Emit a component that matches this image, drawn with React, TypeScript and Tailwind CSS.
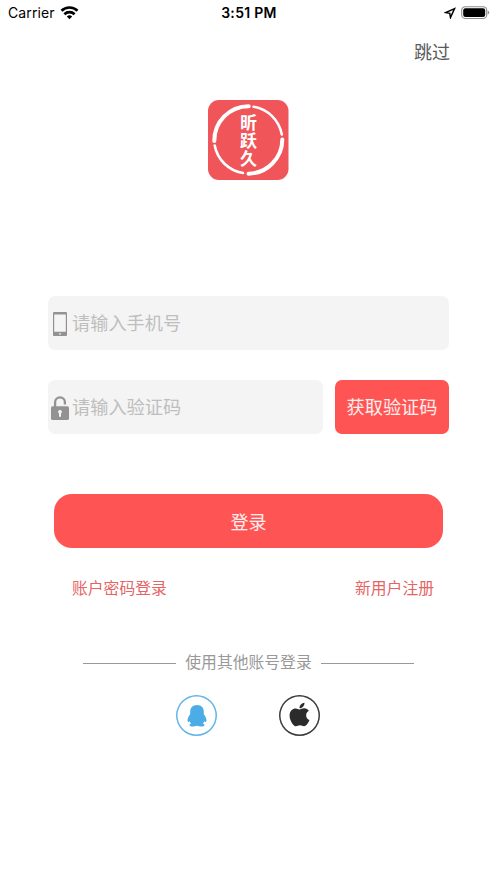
import type { ReactNode } from "react";
import { FaApple } from "react-icons/fa";

function StatusBar() {
  return (
    <div className="grid h-[26px] grid-cols-3 items-center pl-2 pr-[7px] font-['Inter','Liberation_Sans',sans-serif] font-normal text-black">
      <div className="flex items-center gap-[5px]">
        <span className="text-[14px] leading-[26px] tracking-[0.1px]">Carrier</span>
        <svg width="19" height="14" viewBox="0 0 18 14" fill="none" stroke="currentColor" strokeWidth="2.7">
          <path d="M1 4.8a11.4 11.4 0 0 1 16 0" />
          <path d="M3.9 8.2a7.3 7.3 0 0 1 10.2 0" />
          <path d="M9 13.2 6.300 10.5a3.900 3.900 0 0 1 5.400 0z" fill="currentColor" stroke="none" />
        </svg>
      </div>
      <div className="text-center text-[14px] font-semibold leading-[26px] tracking-[0.3px]">3:51 PM</div>
      <div className="flex items-center justify-end gap-[5px]">
        <svg width="12" height="12" viewBox="0 0 12 12" fill="none" stroke="currentColor" strokeWidth="1.5">
          <path d="M10.600 1.600 1.600 5.600l4.200.7.700 4.200z" />
        </svg>
        <svg width="29" height="14" viewBox="0 0 29 14">
          <rect x="0.7" y="0.7" width="25" height="11.8" rx="3.6" fill="none" stroke="#8e8e8e" strokeWidth="1.1" />
          <rect x="2.2" y="2.2" width="22" height="8.8" rx="2.2" />
          <path d="M26.700 4.600q1.500.5 1.500 2t-1.500 2z" fill="#8e8e8e" />
        </svg>
      </div>
    </div>
  );
}

function Logo() {
  return (
    <svg width="81" height="80" viewBox="0 0 81 80">
      <rect width="80.5" height="80" rx="11" fill="#f0555a" />
      <g fill="none" stroke="#fff" strokeLinecap="round">
        <path d="M6.300 41A34.400 34.400 0 0 1 40.700 6.200" strokeWidth="4" />
        <path d="M45.500 6.700A34.400 34.400 0 0 1 73.800 34.500" strokeWidth="2.6" />
        <path d="M74.300 39.500A34.400 34.400 0 0 1 40.500 73.700" strokeWidth="4" />
        <path d="M35 73A34.400 34.400 0 0 1 6.700 45.500" strokeWidth="2.6" />
      </g>
      <g
        className="font-['Noto_Sans_CJK_SC',sans-serif] text-[17px] font-bold"
        fill="#fff"
        textAnchor="middle"
      >
        <text x="40.5" y="28.5">昕</text>
        <text x="40.5" y="46.5">跃</text>
        <text x="40.5" y="64.5">久</text>
      </g>
    </svg>
  );
}

function PhoneIcon() {
  return (
    <svg width="24" height="24" viewBox="0 0 24 24">
      <path
        fill="#929292"
        fillRule="evenodd"
        d="M6 0h12q1 0 1 1v22q0 1-1 1H6q-1 0-1-1V1q0-1 1-1zm.2 2.400v17.400h11.600V2.400zm4.900 18.800v1.300h1.800v-1.300z"
      />
    </svg>
  );
}

function LockIcon() {
  return (
    <svg width="24" height="24" viewBox="0 0 24 24">
      <path d="M7.100 11V6.200a4.900 4.900 0 0 1 9.800 0v2.200" fill="none" stroke="#929292" strokeWidth="2.3" />
      <path
        fill="#929292"
        fillRule="evenodd"
        d="M4.600 10.200h14.800q1.600 0 1.600 1.600v10.600q0 1.600-1.600 1.600H4.600q-1.600 0-1.600-1.600V11.800q0-1.600 1.600-1.600zM12 13.900a1.900 1.900 0 0 0-1 3.500v3.400h2v-3.400a1.900 1.900 0 0 0-1-3.500z"
      />
    </svg>
  );
}

function QQIcon() {
  return (
    <svg width="20" height="22" viewBox="0 0 20 22" fill="#4bace6">
      <path d="M10 0c4.300 0 6.800 2.900 6.800 6.500v2.800c1.700 2 2.700 4.500 2.700 6.300 0 1.500-.9 1.700-2.300.7-.3.900-.7 1.600-1.300 2.200 1.300.5 1.700 1.200 1.500 1.900-.4 1.400-5 1.500-7.400.4-2.400 1.100-7 1-7.400-.4-.2-.7.2-1.400 1.500-1.900-.6-.6-1-1.300-1.300-2.200-1.400 1-2.300.8-2.300-.7 0-1.800 1-4.300 2.700-6.300V6.500C3.200 2.900 5.700 0 10 0z" />
    </svg>
  );
}

function Field({ icon, placeholder }: { icon: ReactNode; placeholder: string }) {
  return (
    <label className="flex h-[54px] min-w-0 flex-1 items-center rounded-[7px] bg-[#f4f4f4]">
      <span className="shrink-0 pt-px">{icon}</span>
      <input
        className="min-w-0 flex-1 bg-transparent pt-1 text-[18.2px] outline-none placeholder:text-[#bebebe]"
        placeholder={placeholder}
      />
    </label>
  );
}

export default function App() {
  return (
    <div className="flex h-[883px] w-[497px] flex-col bg-white font-['Liberation_Sans','Noto_Sans_CJK_SC',sans-serif]">
      <StatusBar />

      <div className="flex justify-end pr-[47px] pt-[11px]">
        <button className="h-[31px] text-[18px] leading-[30px] text-[#5a5a5a]">跳过</button>
      </div>

      <div className="flex justify-center pt-8">
        <Logo />
      </div>

      <form className="mt-[116px] px-12">
        <div className="flex">
          <Field icon={<PhoneIcon />} placeholder="请输入手机号" />
        </div>
        <div className="mt-[30px] flex gap-3">
          <Field icon={<LockIcon />} placeholder="请输入验证码" />
          <button type="button" className="h-[54px] w-[114px] rounded-[7px] bg-[#ff5454] pt-1 text-[18.2px] text-white/90">
            获取验证码
          </button>
        </div>

        <div className="mt-[60px] px-[6px]">
          <button type="button" className="block h-[54px] w-full rounded-[18px] bg-[#ff5454] pt-1 text-[18px] text-white/90">
            登录
          </button>
        </div>

        <div className="mt-[29px] flex justify-between pl-6 pr-[15px] text-[15.8px] leading-6 text-[#e56464]">
          <a href="#">账户密码登录</a>
          <a href="#">新用户注册</a>
        </div>
      </form>

      <div className="mt-[50px] flex items-center justify-center gap-[9px] text-[15.8px] leading-6 text-[#999]">
        <span className="h-px w-[93px] bg-[#999]" />
        <span>使用其他账号登录</span>
        <span className="h-px w-[93px] bg-[#999]" />
      </div>

      <div className="mt-5 flex justify-center gap-[62px] pr-px">
        <button className="flex size-[41px] items-center justify-center rounded-full ring-[1.5px] ring-inset ring-[#62b5e6]">
          <QQIcon />
        </button>
        <button className="flex size-[41px] items-center justify-center rounded-full ring-[1.5px] ring-inset ring-[#3a3a3a]">
          <FaApple className="mb-[2px] text-[27px] text-[#2b2b2b]" />
        </button>
      </div>
    </div>
  );
}
